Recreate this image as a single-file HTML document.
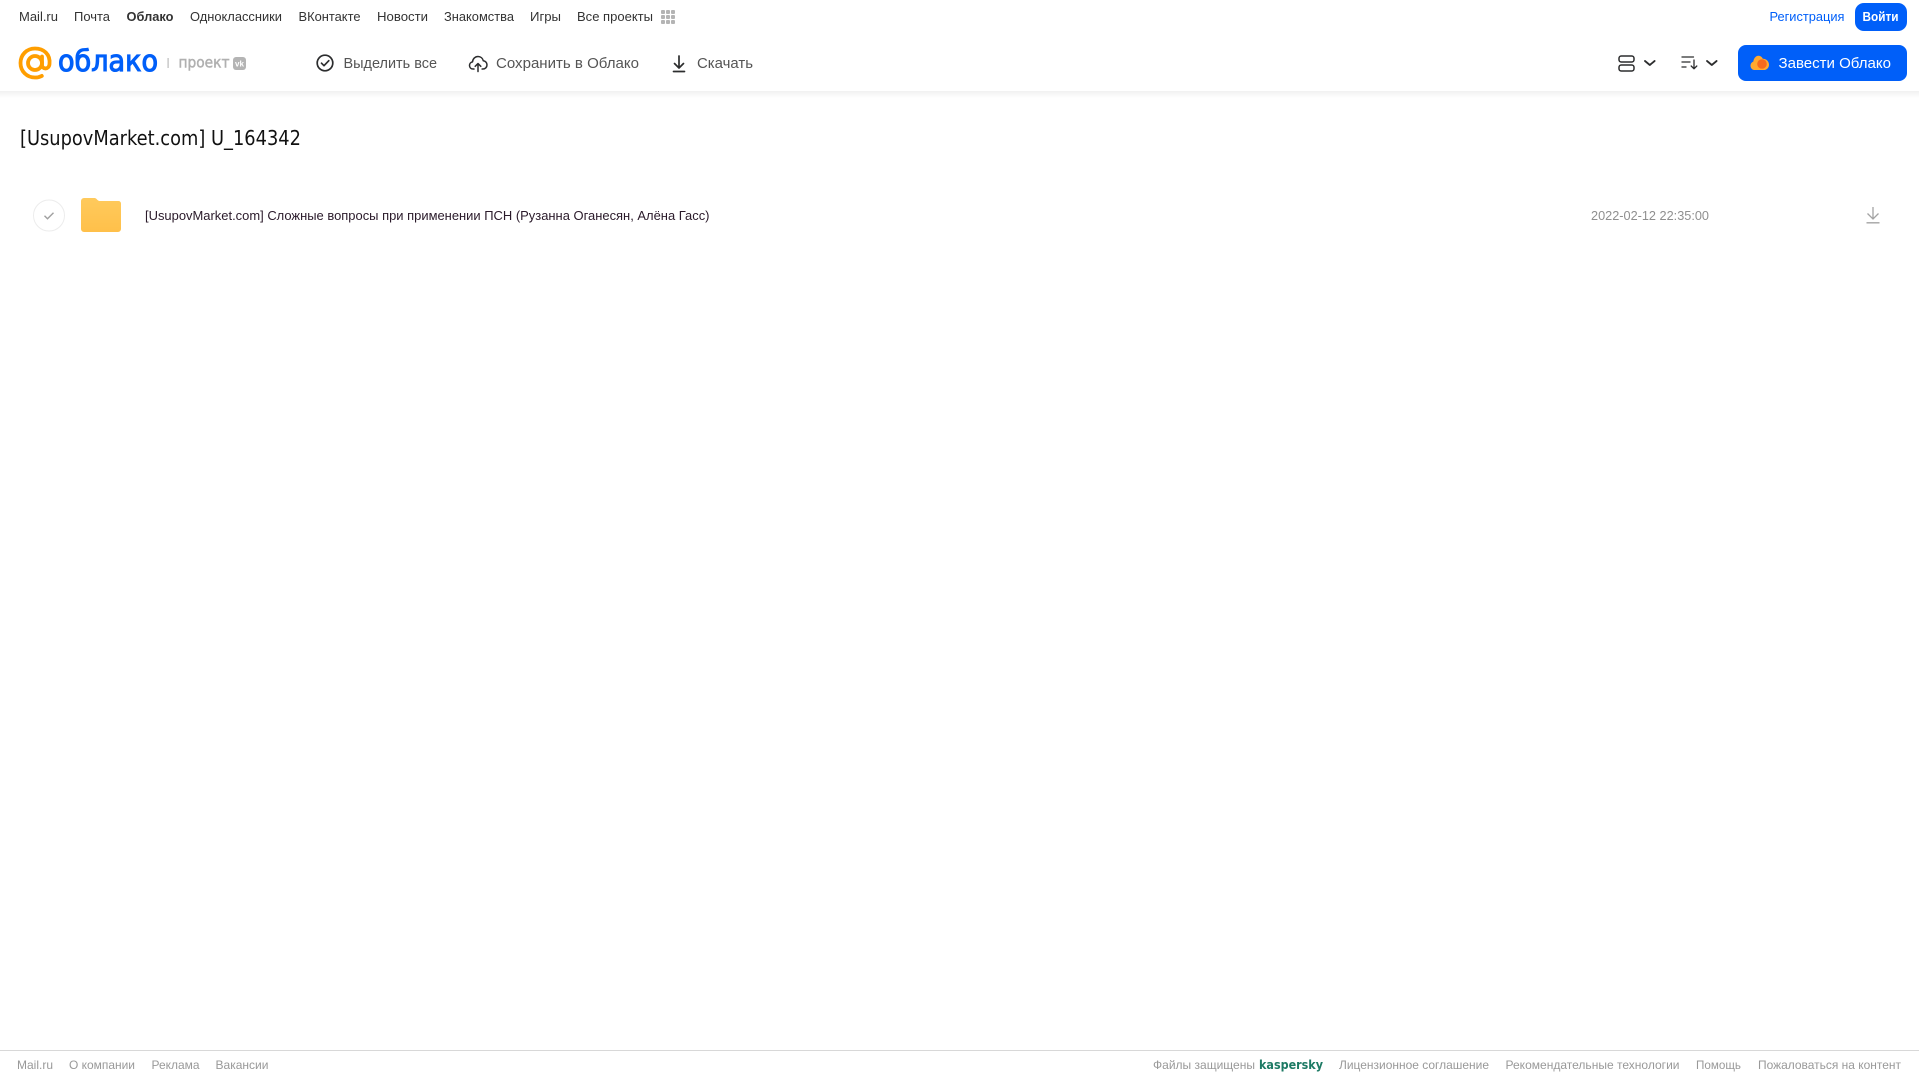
<!DOCTYPE html>
<html lang="ru">
<head>
<meta charset="utf-8">
<title>Облако</title>
<style>
html,body{margin:0;padding:0;background:#fff;width:1919px;height:1079px;overflow:hidden}
svg{display:block;position:absolute;left:0;top:0}
text{font-family:"Liberation Sans",Arial,sans-serif}
.n{font-size:13px;fill:#333}
.t{font-size:15px;fill:#555}
.f{font-size:12px;fill:#999}
.d{font-family:"DejaVu Sans","Liberation Sans",sans-serif}
</style>
</head>
<body>
<svg width="1919" height="1079" viewBox="0 0 1919 1079" xmlns="http://www.w3.org/2000/svg">
<defs>
<linearGradient id="sh" x1="0" y1="0" x2="0" y2="1"><stop offset="0" stop-color="#f1f1f1"/><stop offset="1" stop-color="#fff"/></linearGradient>
<linearGradient id="fo" x1="0" y1="0" x2="0" y2="1"><stop offset="0" stop-color="#ffca5c"/><stop offset="1" stop-color="#ffc04a"/></linearGradient>
</defs>
<rect x="0" y="91" width="1919" height="7" fill="url(#sh)"/>

<!-- top nav -->
<text class="n" x="19" y="21" textLength="39" lengthAdjust="spacingAndGlyphs">Mail.ru</text>
<text class="n" x="74" y="21" textLength="36" lengthAdjust="spacingAndGlyphs">Почта</text>
<text class="n" x="126.500" y="21" textLength="47" lengthAdjust="spacingAndGlyphs" font-weight="700">Облако</text>
<text class="n" x="190" y="21" textLength="92" lengthAdjust="spacingAndGlyphs">Одноклассники</text>
<text class="n" x="298.500" y="21" textLength="62" lengthAdjust="spacingAndGlyphs">ВКонтакте</text>
<text class="n" x="377" y="21" textLength="51" lengthAdjust="spacingAndGlyphs">Новости</text>
<text class="n" x="444" y="21" textLength="70" lengthAdjust="spacingAndGlyphs">Знакомства</text>
<text class="n" x="530" y="21" textLength="31" lengthAdjust="spacingAndGlyphs">Игры</text>
<text class="n" x="577" y="21" textLength="76" lengthAdjust="spacingAndGlyphs">Все проекты</text>
<g fill="#b4b4b4">
<rect x="661" y="10" width="4" height="4" rx="1"/><rect x="666" y="10" width="4" height="4" rx="1"/><rect x="671" y="10" width="4" height="4" rx="1"/>
<rect x="661" y="15" width="4" height="4" rx="1"/><rect x="666" y="15" width="4" height="4" rx="1"/><rect x="671" y="15" width="4" height="4" rx="1"/>
<rect x="661" y="20" width="4" height="4" rx="1"/><rect x="666" y="20" width="4" height="4" rx="1"/><rect x="671" y="20" width="4" height="4" rx="1"/>
</g>
<text x="1769.500" y="21" font-size="13" fill="#005ff9" textLength="75" lengthAdjust="spacingAndGlyphs">Регистрация</text>
<rect x="1855" y="3" width="52" height="28" rx="9" fill="#005ff9"/>
<text x="1862.500" y="21" font-size="13" font-weight="700" fill="#fff" textLength="36" lengthAdjust="spacingAndGlyphs">Войти</text>

<!-- logo -->
<g fill="none" stroke="#ff9e00" stroke-width="3.800" stroke-linecap="round">
<circle cx="35" cy="63" r="7"/>
<path d="M42 56.500V65c0 4.500 7 5 7.500-1C50.500 54 43.500 48.500 35 48.500 26.500 48.500 20.500 55 20.500 63c0 8.500 6.500 14.500 14.500 14.500 2.500 0 4.800-.5 6.800-1.600"/>
</g>
<text class="d" x="58" y="71" font-size="29" fill="#005ff9" stroke="#005ff9" stroke-width="1.100" textLength="100" lengthAdjust="spacingAndGlyphs">облако</text>
<rect x="167.500" y="58" width="1.200" height="10" fill="#bbb"/>
<text class="d" x="178.500" y="67.500" font-size="15" fill="#b0b0b0" stroke="#b0b0b0" stroke-width=".5" textLength="51" lengthAdjust="spacingAndGlyphs">проект</text>
<rect x="233" y="57" width="13" height="13" rx="3" fill="#b4b4b4"/>
<text x="235" y="66.500" font-size="8" font-weight="700" fill="#fff" textLength="9" lengthAdjust="spacingAndGlyphs">vk</text>

<!-- toolbar -->
<g fill="none" stroke="#2c2d2e" stroke-width="1.500" stroke-linecap="round" stroke-linejoin="round">
<circle cx="325" cy="63" r="7.800" stroke-width="1.700"/>
<path d="M321.500 63.200l2.500 2.500 4.800-5" stroke-width="1.700"/>
<path d="M474 69h-.8c-2.400 0-3.700-1.700-3.700-3.500 0-1.900 1.300-3.300 3-3.600.4-3.300 2.700-5.400 5.500-5.400 2.600 0 4.700 1.800 5.300 4.300 2.200.2 3.700 2 3.700 4.100 0 2.300-1.700 4.100-4 4.100h-.9"/>
<path d="M478 71.500v-8M475.200 66.300l2.800-2.800 2.800 2.800"/>
<path d="M679 56v12M674.500 63.500L679 68l4.500-4.500M673.500 71.500h11" stroke-width="1.700"/>
<rect x="1619" y="56" width="15" height="6" rx="2.200"/>
<rect x="1619" y="65" width="15" height="6" rx="2.200"/>
<path d="M1645 61l4.800 4 4.800-4" stroke-width="1.800"/>
<path d="M1682 57h11.500M1682 62h8M1682 67h4M1694 60v8.500M1691.200 66l2.800 2.800 2.800-2.800" stroke-width="1.300"/>
<path d="M1707 61l4.800 4 4.800-4" stroke-width="1.800"/>
</g>
<text class="t" x="343.500" y="68" textLength="93.500" lengthAdjust="spacingAndGlyphs">Выделить все</text>
<text class="t" x="496" y="68" textLength="143" lengthAdjust="spacingAndGlyphs">Сохранить в Облако</text>
<text class="t" x="697" y="68" textLength="56" lengthAdjust="spacingAndGlyphs">Скачать</text>

<rect x="1738" y="45" width="169" height="36" rx="8" fill="#005ff9"/>
<path d="M1755 70c-2.800 0-4.500-1.900-4.500-4.300 0-2 1.200-3.500 2.800-4.100.4-3 2.200-5.900 5.100-5.900 2.200 0 3.500 1.200 4.400 3 3.400-.1 6.200 2.600 6.200 6 0 3-2.300 5.300-5 5.300z" fill="#ffa930"/>
<circle cx="1762" cy="64" r="4.800" fill="#f56a1f"/>
<text x="1778.500" y="68" font-size="15" fill="#fff" textLength="112.500" lengthAdjust="spacingAndGlyphs">Завести Облако</text>

<!-- title -->
<text class="d" x="20" y="145" font-size="20" fill="#111" textLength="281" lengthAdjust="spacingAndGlyphs">[UsupovMarket.com] U_164342</text>

<!-- row -->
<circle cx="49" cy="215.500" r="15.500" fill="#fff" stroke="#ececec" stroke-width="1"/>
<path d="M44.500 215.800l3 3 6-6" fill="none" stroke="#a0a0a0" stroke-width="1.400"/>
<path d="M81 201a3 3 0 0 1 3-3h10c2 0 2.500 1 3.500 2l1.500 1h19.500a2.500 2.500 0 0 1 2.500 2.500V229a3 3 0 0 1-3 3H84a3 3 0 0 1-3-3z" fill="url(#fo)"/>
<text x="145" y="220" font-size="13" fill="#2a1a2a" textLength="564.500" lengthAdjust="spacingAndGlyphs">[UsupovMarket.com] Сложные вопросы при применении ПСН (Рузанна Оганесян, Алёна Гасс)</text>
<text x="1591" y="220" font-size="13" fill="#8f8f8f" textLength="118" lengthAdjust="spacingAndGlyphs">2022-02-12 22:35:00</text>
<path d="M1873 207v12M1867.500 213.500l5.500 5.500 5.500-5.500M1866.500 222.800h13" fill="none" stroke="#a3a3a3" stroke-width="1.300"/>

<!-- footer -->
<rect x="0" y="1050" width="1919" height="1" fill="#d8d8d8"/>
<text class="f" x="17" y="1069" textLength="36" lengthAdjust="spacingAndGlyphs">Mail.ru</text>
<text class="f" x="69" y="1069" textLength="66" lengthAdjust="spacingAndGlyphs">О компании</text>
<text class="f" x="151.500" y="1069" textLength="48" lengthAdjust="spacingAndGlyphs">Реклама</text>
<text class="f" x="215.500" y="1069" textLength="53" lengthAdjust="spacingAndGlyphs">Вакансии</text>
<text class="f" x="1153" y="1069" textLength="102" lengthAdjust="spacingAndGlyphs">Файлы защищены</text>
<text class="d" x="1259" y="1069" font-size="12" font-weight="700" fill="#1d7a64" textLength="64" lengthAdjust="spacingAndGlyphs">kaspersky</text>
<text class="f" x="1339" y="1069" textLength="150" lengthAdjust="spacingAndGlyphs">Лицензионное соглашение</text>
<text class="f" x="1505.500" y="1069" textLength="174" lengthAdjust="spacingAndGlyphs">Рекомендательные технологии</text>
<text class="f" x="1696" y="1069" textLength="45" lengthAdjust="spacingAndGlyphs">Помощь</text>
<text class="f" x="1758" y="1069" textLength="143" lengthAdjust="spacingAndGlyphs">Пожаловаться на контент</text>
</svg>
</body>
</html>
